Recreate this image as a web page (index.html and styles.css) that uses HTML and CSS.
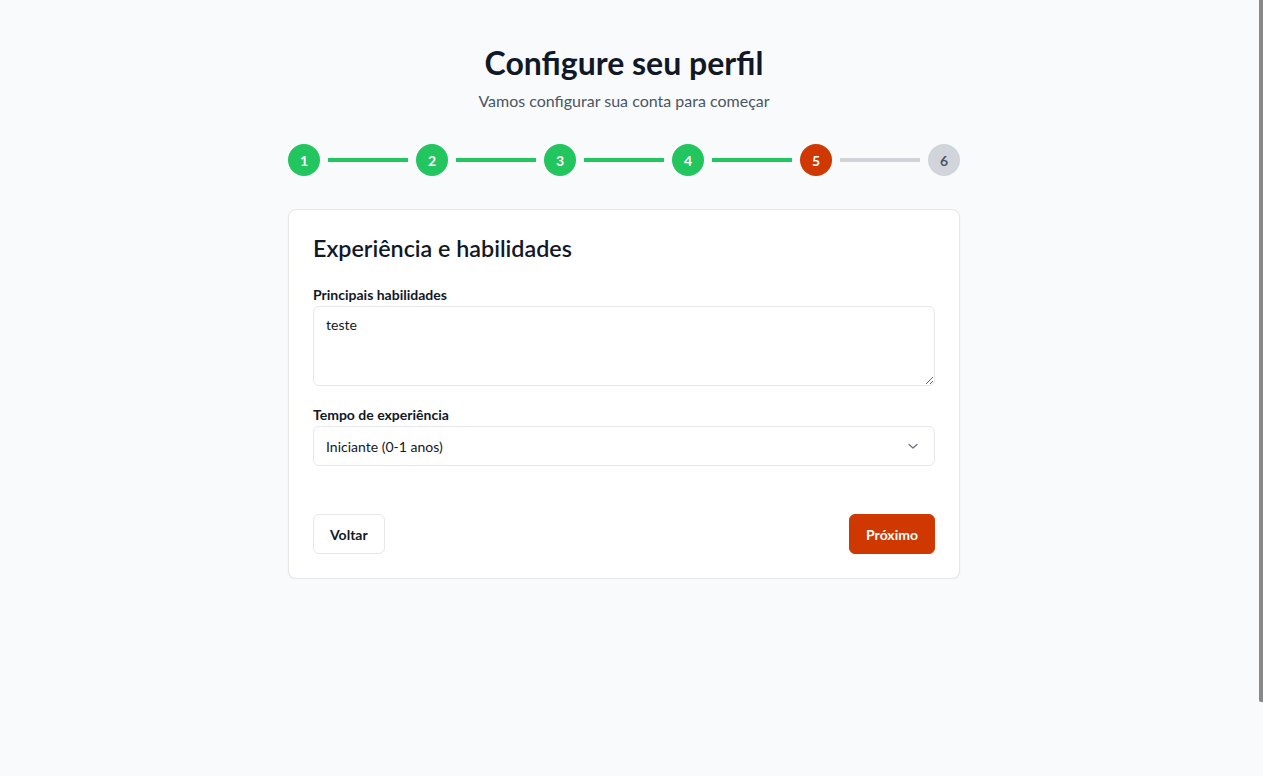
FILE: index.html
```html
<!DOCTYPE html>
<html lang="pt-BR">
<head>
<meta charset="utf-8">
<title>Configure seu perfil</title>
<link rel="stylesheet" href="styles.css">
</head>
<body>
<main class="page">
  <header class="intro">
    <h1 class="title">Configure seu perfil</h1>
    <p class="subtitle">Vamos configurar sua conta para começar</p>
  </header>

  <ol class="stepper">
    <li class="step done">1</li>
    <li class="bar done"></li>
    <li class="step done">2</li>
    <li class="bar done"></li>
    <li class="step done">3</li>
    <li class="bar done"></li>
    <li class="step done">4</li>
    <li class="bar done"></li>
    <li class="step current">5</li>
    <li class="bar"></li>
    <li class="step">6</li>
  </ol>

  <section class="card">
    <h2 class="card-title">Experiência e habilidades</h2>
    <div class="field">
      <label class="label" for="skills">Principais habilidades</label>
      <textarea id="skills" class="textarea">teste</textarea>
    </div>
    <div class="field">
      <label class="label" for="exp">Tempo de experiência</label>
      <div class="select-wrap">
        <select id="exp" class="select">
          <option>Iniciante (0-1 anos)</option>
          <option>Intermediário (1-3 anos)</option>
          <option>Avançado (3+ anos)</option>
        </select>
        <svg class="chevron" width="12" height="12" viewBox="0 0 12 12" aria-hidden="true"><path d="M2 4.5 L6 8 L10 4.5" fill="none" stroke="#6b7280" stroke-width="1.3" stroke-linecap="round" stroke-linejoin="round"/></svg>
      </div>
    </div>
    <div class="actions">
      <button class="btn btn-outline" type="button">Voltar</button>
      <button class="btn btn-primary" type="button">Próximo</button>
    </div>
  </section>
</main>
<div class="scroll-thumb" aria-hidden="true"></div>
</body>
</html>
```

FILE: styles.css
```css
html {
  background: #f9fafb;
  overflow: hidden;
}
body {
  margin: 0;
  padding-right: 15px;
  background: #f9fafb;
  font-family: "Lato", "Noto Sans", "Liberation Sans", sans-serif;
  color: #111827;
}
.scroll-thumb {
  position: fixed;
  top: 0;
  right: 0;
  width: 4px;
  height: 702px;
  background: #888888;
  border-bottom-left-radius: 2px;
}
.page {
  max-width: 672px;
  margin: 0 auto;
  padding-top: 45px;
}
.intro {
  text-align: center;
}
.title {
  margin: 0;
  font-size: 32px;
  line-height: 36px;
  font-weight: 700;
  color: #111827;
}
.subtitle {
  margin: 8px 0 0;
  font-size: 16px;
  line-height: 24px;
  color: #4b5563;
}
.stepper {
  list-style: none;
  margin: 31px 0 0;
  padding: 0;
  display: flex;
  align-items: center;
}
.step {
  width: 32px;
  height: 32px;
  border-radius: 50%;
  background: #d1d5db;
  color: #4b5563;
  font-size: 14px;
  font-weight: 700;
  display: flex;
  align-items: center;
  justify-content: center;
  flex: none;
}
.step.done {
  background: #22c55e;
  color: #ffffff;
}
.step.current {
  background: #d03801;
  color: #ffffff;
}
.bar {
  flex: 1;
  height: 4px;
  margin: 0 8px;
  background: #d1d5db;
}
.bar.done {
  background: #22c55e;
}
.card {
  margin-top: 33px;
  background: #ffffff;
  border: 1px solid #e5e7eb;
  border-radius: 8px;
  box-shadow: 0 1px 2px rgba(0, 0, 0, 0.06);
  padding: 24px;
}
.card-title {
  margin: 0 0 23px;
  font-size: 23.3px;
  line-height: 28px;
  font-weight: 600;
  color: #111827;
}
.field {
  display: flex;
  flex-direction: column;
}
.field + .field {
  margin-top: 19px;
}
.label {
  font-size: 14px;
  line-height: 20px;
  font-weight: 700;
  color: #111827;
  margin-bottom: 1px;
}
.textarea {
  box-sizing: border-box;
  height: 80px;
  border: 1px solid #e5e7eb;
  border-radius: 6px;
  padding: 8px 12px;
  font-family: inherit;
  font-size: 14px;
  line-height: 20px;
  color: #111827;
  background: #ffffff;
  resize: vertical;
  outline: none;
}
.select-wrap {
  position: relative;
}
.select {
  box-sizing: border-box;
  width: 100%;
  height: 40px;
  border: 1px solid #e5e7eb;
  border-radius: 6px;
  padding: 0 12px;
  font-family: inherit;
  font-size: 14px;
  color: #111827;
  background: #ffffff;
  appearance: none;
  -webkit-appearance: none;
  outline: none;
}
.chevron {
  position: absolute;
  right: 16px;
  top: 14px;
  pointer-events: none;
}
.actions {
  margin-top: 48px;
  display: flex;
  justify-content: space-between;
}
.btn {
  height: 40px;
  border-radius: 6px;
  padding: 0 16px;
  font-family: inherit;
  font-size: 14px;
  font-weight: 700;
  cursor: pointer;
}
.btn-outline {
  background: #ffffff;
  border: 1px solid #e5e7eb;
  color: #111827;
}
.btn-primary {
  background: #d03801;
  border: 1px solid #d03801;
  color: #ffffff;
}
```
